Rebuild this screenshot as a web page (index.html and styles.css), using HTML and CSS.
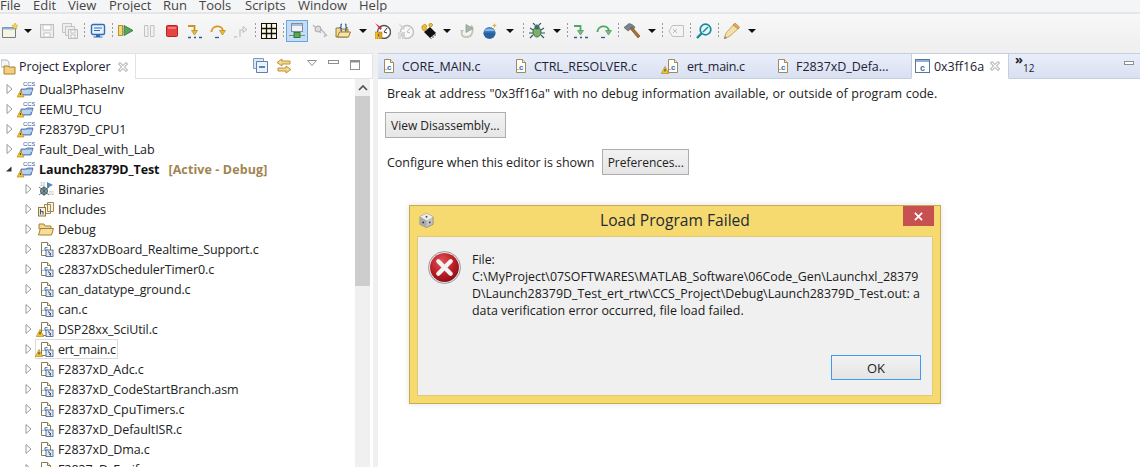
FILE: index.html
```html
<!DOCTYPE html>
<html lang="en">
<head>
<meta charset="utf-8">
<title>Load Program Failed</title>
<link rel="stylesheet" href="styles.css">
</head>
<body>
<svg class="defs" width="0" height="0">
  <defs>
    <symbol id="proj" viewBox="0 0 18 18">
      <path d="M4 9h5l1-1h6l-2 7H4z" fill="#8db4e2" stroke="#3f659c" stroke-width=".8"/>
      <path d="M5 11h10M5 13h8" stroke="#fff" stroke-width=".8"/>
      <text x="6" y="6" font-size="6" font-family="Liberation Sans" fill="#2d5a9a">CCS</text>
      <path d="M3.500 10.500L7 17H0z" fill="#f4c430" stroke="#a87d10" stroke-width=".6"/>
      <path d="M3.500 13v2" stroke="#222" stroke-width=".8"/>
    </symbol>
    <symbol id="cfile" viewBox="0 0 16 16">
      <path d="M3.500 1.500h6l3 3v10h-9z" fill="#fff" stroke="#a08a58"/>
      <path d="M9.500 1.500v3h3" fill="#f6ecd0" stroke="#a08a58"/>
      <text x="6" y="12" font-size="8" font-weight="700" font-family="Liberation Sans" fill="#3c6ea5">c</text>
      <rect x="4.500" y="11" width="1" height="1" fill="#3c6ea5"/>
    </symbol>
    <symbol id="cref" viewBox="0 0 16 16">
      <path d="M3.500 1.500h6l3 3v10h-9z" fill="#fff" stroke="#8a7a50"/>
      <path d="M9.500 1.500v3h3" fill="#f6ecd0" stroke="#8a7a50"/>
      <text x="6" y="10" font-size="7" font-weight="700" font-family="Liberation Sans" fill="#3c6ea5">c</text>
      <rect x="4.500" y="9" width="1" height="1" fill="#3c6ea5"/>
      <rect x="8" y="9" width="7" height="6.500" fill="#dfe8f5" stroke="#3a5f8c" stroke-width=".8"/>
      <path d="M10 10.500l3 2.500-1.300.2.800 1.300" stroke="#223" stroke-width=".9" fill="none"/>
    </symbol>
    <symbol id="warn" viewBox="0 0 8 8">
      <path d="M4 .5L7.700 7.500H.3z" fill="#f4c430" stroke="#a87d10" stroke-width=".6"/>
      <path d="M4 3v2.500" stroke="#222" stroke-width=".9"/>
    </symbol>
    <symbol id="tri" viewBox="0 0 8 12">
      <path d="M2 1.500L7 6 2 10.500z" fill="#fff" stroke="#9a9a9a"/>
    </symbol>
    <symbol id="x" viewBox="0 0 12 12">
      <path d="M1.500 3L3 1.500 6 4.500 9 1.500 10.500 3 7.500 6 10.500 9 9 10.500 6 7.500 3 10.500 1.500 9 4.500 6z" fill="#fff" stroke="#9a9a9a"/>
    </symbol>
  </defs>
</svg>

<div class="menu">
  <span class="m-file">File</span><span class="m-edit">Edit</span><span class="m-view">View</span><span class="m-proj">Project</span><span class="m-run">Run</span><span class="m-tools">Tools</span><span class="m-scr">Scripts</span><span class="m-win">Window</span><span class="m-help">Help</span>
</div>

<div class="toolbar">
  <svg class="ic" viewBox="0 0 16 16"><path d="M.5 4.500h13v10H.5z" fill="#f8f4e0" stroke="#6f7f92"/><path d="M.5 4.500h13v2H.5z" fill="#8fb0d8"/><path d="M13 0l1 2 2 .5-1.500 1.500.3 2L13 5l-1.800 1 .3-2L10 2.500l2-.5z" fill="#f7d648" stroke="#c49a20" stroke-width=".5"/></svg>
  <i class="arr first"></i>
  <svg class="ic" viewBox="0 0 16 16"><path d="M1.500 1.500h13v13h-13z" fill="#eee" stroke="#bbb"/><path d="M4 2h8v5H4zM5 10h6v4H5z" fill="#fff" stroke="#c4c4c4"/></svg>
  <svg class="ic" viewBox="0 0 16 16"><path d="M.5.500h9v9h-9z" fill="#eee" stroke="#c4c4c4"/><path d="M3.500 3.500h9v9h-9z" fill="#eee" stroke="#c4c4c4"/><path d="M6 6h10v10H6z" fill="#eee"/><path d="M6.500 6.500h9v9h-9z" fill="#eee" stroke="#bbb"/><path d="M9 7h4v3H9zM9 12h4v3H9z" fill="#fff" stroke="#c4c4c4"/></svg>
  <i class="sep"></i>
  <svg class="ic" viewBox="0 0 16 16"><rect x="1.500" y="1.500" width="13" height="10" rx="1.500" fill="#e8f1fb" stroke="#2f6eb5" stroke-width="1.400"/><path d="M4 5h8M4 7.500h6" stroke="#2f6eb5"/><path d="M6 12h4v1.500h2.500v1h-9v-1H6z" fill="#2f6eb5"/></svg>
  <i class="sep"></i>
  <svg class="ic" viewBox="0 0 16 16"><rect x=".5" y="2.500" width="4" height="10" fill="#f4d675" stroke="#b8932a"/><path d="M6 2.500v10l9-5z" fill="#58a45f" stroke="#3c8446"/></svg>
  <svg class="ic" viewBox="0 0 16 16"><path d="M3.500 2.500h3.500v11H3.500zM9.500 2.500H13v11H9.500z" fill="#f2f2f2" stroke="#c2c2c2"/></svg>
  <svg class="ic" viewBox="0 0 16 16"><rect x="2.500" y="2.500" width="11" height="11" rx="1" fill="#e64343" stroke="#b82222"/><rect x="4" y="4" width="8" height="2" fill="#f47a7a"/></svg>
  <svg class="ic" viewBox="0 0 16 16"><path d="M1 3h6.500v6" fill="none" stroke="#c89520" stroke-width="1.800"/><path d="M4.500 7.500h6L7.500 12z" fill="#eebb33" stroke="#a87d10" stroke-width=".6"/><path d="M1 14.500h3M7 14.500h2M12 14.500h3" stroke="#2d5a9a" stroke-width="1.300"/></svg>
  <svg class="ic" viewBox="0 0 16 16"><path d="M1.500 9C1.500 2.500 12 1 13 8" fill="none" stroke="#d79a20" stroke-width="1.800"/><path d="M9.500 7.500h6L12.500 12z" fill="#eebb33" stroke="#a87d10" stroke-width=".6"/><path d="M5 14.500h4" stroke="#2d5a9a" stroke-width="1.300"/></svg>
  <svg class="ic" viewBox="0 0 16 16"><path d="M7 14V7h4" fill="none" stroke="#cfcfcf" stroke-width="1.600"/><path d="M10 3.500v6L14 6.500z" fill="#eee" stroke="#c0c0c0"/><path d="M1 14h3" stroke="#bcbcbc" stroke-width="1.200"/></svg>
  <i class="sep"></i>
  <svg class="ic" viewBox="0 0 16 16"><rect x=".5" y=".5" width="15" height="15" fill="#fffbe0" stroke="#111"/><path d="M5.500 1v14M10.500 1v14M1 5.500h14M1 10.500h14" stroke="#111" stroke-width="1.300"/></svg>
  <i class="sep"></i>
  <span class="hl"><svg class="ic" viewBox="0 0 16 16"><rect x="2.500" y=".5" width="11" height="8" fill="#f2f2f2" stroke="#7d8ea6"/><rect x="3" y="1" width="10" height="2" fill="#a8bedd"/><path d="M8 9v3M0 12.500h16" stroke="#8a8a70"/><rect x="5" y="9.500" width="6" height="5" fill="#5aa85a" stroke="#2f7a3a"/></svg></span>
  <svg class="ic" viewBox="0 0 16 16"><path d="M1 2l8 8M3 8l5-5M7 4l8 9M12 14l2-3" stroke="#bdbdbd" stroke-width="1.500" fill="none"/><circle cx="6" cy="6" r="3" fill="#dcdcdc" stroke="#aaa"/></svg>
  <svg class="ic" viewBox="0 0 16 16"><path d="M1 5h5l1 1h6v8H1z" fill="#f3d896" stroke="#9c7a2e"/><path d="M2.500 14l2-5h11l-2 5z" fill="#f7e3ad" stroke="#9c7a2e"/><path d="M7 1C5 1 7 4 5.500 4.500 7 5 5 8 7 8M10 1c2 0 0 3 1.500 3.500C10 5 12 8 10 8" fill="none" stroke="#2c5a92" stroke-width="1.200"/></svg>
  <i class="arr"></i>
  <svg class="ic ic-timer" viewBox="0 0 16 16"><circle cx="9" cy="9" r="6.500" fill="#fff" stroke="#555" stroke-width="1.400"/><path d="M12 5L9 9l3 1" stroke="#333" fill="none"/><path d="M0 0l7 5-1.500 2z" fill="#e21e3c"/><rect y="9" width="3" height="7" fill="#f0c020" stroke="#a87d10" stroke-width=".5"/><rect x="4" y="9" width="3" height="7" fill="#e9a21e" stroke="#a87d10" stroke-width=".5"/></svg>
  <svg class="ic" viewBox="0 0 16 16"><circle cx="9" cy="9" r="6.500" fill="#f7f7f7" stroke="#c0c0c0" stroke-width="1.400"/><path d="M12 5L9 9l3 1" stroke="#bbb" fill="none"/><path d="M0 0l7 5-1.500 2z" fill="#cfcfcf"/><rect y="9" width="3" height="7" fill="#ddd"/><rect x="4" y="9" width="3" height="7" fill="#d2d2d2"/></svg>
  <svg class="ic" viewBox="0 0 16 16"><path d="M3 9l6-5 6 6-6 5z" fill="#111"/><path d="M1 3l3-2 2 2-1 2 1 2-3 1-2-2z" fill="#eebb33" stroke="#a87d10" stroke-width=".6"/><path d="M8 1l2-1 2 2-2 2-2-1z" fill="#eebb33" stroke="#a87d10" stroke-width=".6"/><path d="M10 15v1M12 13v2M14 11v2" stroke="#555"/></svg>
  <i class="arr first after-chip"></i>
  <svg class="ic" viewBox="0 0 16 16"><path d="M12 2.500C15 5.500 14 13.500 8 14 3.500 14.500 1.500 11 3 8.500" fill="none" stroke="#c7c2b0" stroke-width="1.800"/><path d="M1 7l4 0-2 3z" fill="#c7c2b0"/><path d="M7 1.500v8l7-4z" fill="#a8b6a8" stroke="#8e9a8e" stroke-width=".7"/></svg>
  <svg class="ic" viewBox="0 0 16 16"><circle cx="7.500" cy="10" r="6" fill="#3e7ec0"/><path d="M1.500 9.500a6 6 0 0 0 12 0z" fill="#2a609e"/><path d="M2 8a6 4 0 0 1 11 0z" fill="#8db5de"/><path d="M12.500 0l.7 1.800 1.800.7-1.800.7-.7 1.800-.7-1.800-1.800-.7 1.800-.7z" fill="#eab02a"/></svg>
  <i class="arr after-ball"></i>
  <i class="sep"></i>
  <svg class="ic" viewBox="0 0 16 16"><ellipse cx="8" cy="9" rx="4" ry="5" fill="#7cb06a" stroke="#3a6e50"/><circle cx="8" cy="4" r="2.500" fill="#3f7068"/><path d="M4 7L1 5M4 10H0M4 12l-3 3M12 7l3-2M12 10h4M12 12l3 3M6 2L4 0M10 2l2-2" stroke="#33585a" stroke-width="1.100"/></svg>
  <i class="arr"></i>
  <i class="sep"></i>
  <svg class="ic" viewBox="0 0 16 16"><path d="M1 3h6.500v6" fill="none" stroke="#4fa860" stroke-width="1.800"/><path d="M4.500 7.500h6L7.500 12z" fill="#6cc47a" stroke="#3c8c4c" stroke-width=".6"/><path d="M1 14.500h3M7 14.500h2M12 14.500h3" stroke="#2d5a9a" stroke-width="1.300"/></svg>
  <svg class="ic" viewBox="0 0 16 16"><path d="M1.500 9C1.500 2.500 12 1 13 8" fill="none" stroke="#4fa860" stroke-width="1.800"/><path d="M9.500 7.500h6L12.500 12z" fill="#6cc47a" stroke="#3c8c4c" stroke-width=".6"/><path d="M5 14.500h4" stroke="#2d5a9a" stroke-width="1.300"/></svg>
  <i class="sep"></i>
  <svg class="ic" viewBox="0 0 16 16"><path d="M0 4.500L5 .5l3 1 3 2.500-2 3-2.500-1L4 8z" fill="#7b8590" stroke="#4e5660" stroke-width=".6"/><path d="M6 5.500l8 9.500 2-2-8-9z" fill="#a8702e" stroke="#6e4a1c" stroke-width=".6"/></svg>
  <i class="arr"></i>
  <i class="sep"></i>
  <svg class="ic" viewBox="0 0 16 16"><path d="M4.500 2.500h11v11h-11L1 8z" fill="#f4f4f4" stroke="#c0c0c0"/><path d="M5 6l2 2-2 2M9 6l-2 2 2 2" stroke="#bdbdbd" fill="none"/></svg>
  <i class="sep"></i>
  <svg class="ic" viewBox="0 0 16 16"><circle cx="9.500" cy="6.500" r="5.300" fill="#e6f5f7" stroke="#148a9e" stroke-width="1.700"/><path d="M5.500 10.500L1 15" stroke="#148a9e" stroke-width="2.400"/><path d="M7 9l5-5" stroke="#148a9e" stroke-width="1.500"/></svg>
  <i class="sep"></i>
  <svg class="ic" viewBox="0 0 16 16"><path d="M0 16l2-6 8-9 5 4-9 8z" fill="#f4dfa6" stroke="#b89b55" stroke-width=".8"/><path d="M9 2l5 4 1.500-2L11 0z" fill="#e3a94a" stroke="#a87d30" stroke-width=".6"/><path d="M0 16l3-1-2-2z" fill="#888"/></svg>
  <i class="arr"></i>
</div>

<div class="workbench">
  <section class="left">
    <div class="ltabs">
      <div class="ltab">
        <svg class="ic" viewBox="0 0 16 16"><path d="M0 1h6l2 2v5H0z" fill="#f5f5f5" stroke="#9aa5b5" stroke-width=".8"/><path d="M3 7h4l1 1h6v7H3z" fill="#f2cf7e" stroke="#a5822f"/></svg>
        <span>Project Explorer</span>
        <svg class="close" viewBox="0 0 12 12"><use href="#x"/></svg>
      </div>
      <div class="lacts">
        <svg class="act a1" viewBox="0 0 16 16"><path d="M.5.500h10v10H.5z" fill="#dbe7f5" stroke="#7e9cc0"/><path d="M3.500 3.500h11v11h-11z" fill="#eaf2fb" stroke="#5d80ad"/><path d="M6 9h6" stroke="#2f5e96" stroke-width="1.500"/></svg>
        <svg class="act a2" viewBox="0 0 16 16"><path d="M6 1L1 4.500 6 8V6h8V3H6zM10 8l5 3.500-5 3.500v-2H2v-3h8z" fill="#f4d892" stroke="#b7892b" stroke-width=".9"/></svg>
        <svg class="vm m1" viewBox="0 0 12 8"><path d="M1.500 1.500h9L6 6.500z" fill="#fff" stroke="#8f8f8f"/></svg>
        <svg class="vm m2x" viewBox="0 0 12 8"><rect x=".5" y="1.500" width="10" height="3" fill="#fff" stroke="#8f8f8f"/></svg>
        <svg class="vm m3x" viewBox="0 0 12 12"><rect x=".5" y=".5" width="9" height="9" fill="#fff" stroke="#8f8f8f"/><path d="M1 1.500h8" stroke="#8f8f8f" stroke-width="2"/></svg>
      </div>
    </div>
    <div class="treewrap">
      <div class="tree">
        <div class="row"><svg class="tw"><use href="#tri"/></svg><svg class="pi"><use href="#proj"/></svg><span>Dual3PhaseInv</span></div>
        <div class="row"><svg class="tw"><use href="#tri"/></svg><svg class="pi"><use href="#proj"/></svg><span>EEMU_TCU</span></div>
        <div class="row"><svg class="tw"><use href="#tri"/></svg><svg class="pi"><use href="#proj"/></svg><span>F28379D_CPU1</span></div>
        <div class="row"><svg class="tw"><use href="#tri"/></svg><svg class="pi"><use href="#proj"/></svg><span>Fault_Deal_with_Lab</span></div>
        <div class="row"><svg class="tw" viewBox="0 0 8 12"><path d="M1 8.500L6.500 3.500V8.500z" fill="#333"/></svg><svg class="pi"><use href="#proj"/></svg><b>Launch28379D_Test</b><em>[Active - Debug]</em></div>
        <div class="row sub"><svg class="tw"><use href="#tri"/></svg><svg class="fi" viewBox="0 0 16 16"><path d="M9 1v6l6-3z" fill="#4f86bd"/><circle cx="6" cy="10" r="3.500" fill="#8fa6a6" stroke="#3f5a66"/><path d="M1 6l10 8M1 14l10-8M6 5v10" stroke="#3f5a66" stroke-width=".8"/><text x="2" y="5" font-size="4.500" fill="#aaa" font-family="Liberation Sans">10</text><text x="11" y="14" font-size="4.500" fill="#aaa" font-family="Liberation Sans">01</text></svg><span>Binaries</span></div>
        <div class="row sub"><svg class="tw"><use href="#tri"/></svg><svg class="fi" viewBox="0 0 16 16"><path d="M9.500 1.500h6v9h-6zM6.500 3.500h6v9h-6z" fill="#faf2da" stroke="#9c8a5a"/><rect x=".5" y="6.500" width="7" height="8.500" fill="#fbf0cf" stroke="#96793a"/><path d="M2.500 8v5.500M2.500 10.500h2.500v3" stroke="#2d5a8a" stroke-width="1.100" fill="none"/></svg><span>Includes</span></div>
        <div class="row sub"><svg class="tw"><use href="#tri"/></svg><svg class="fi" viewBox="0 0 16 16"><path d="M1 5V3h5l1 2h6v3H1z" fill="#f4d892" stroke="#a5822f"/><path d="M.5 14l2-6.500h13l-2 6.500z" fill="#f6dd9e" stroke="#a5822f"/></svg><span>Debug</span></div>
        <div class="row sub"><svg class="tw"><use href="#tri"/></svg><svg class="fi"><use href="#cref"/></svg><span>c2837xDBoard_Realtime_Support.c</span></div>
        <div class="row sub"><svg class="tw"><use href="#tri"/></svg><svg class="fi"><use href="#cref"/></svg><span>c2837xDSchedulerTimer0.c</span></div>
        <div class="row sub"><svg class="tw"><use href="#tri"/></svg><svg class="fi"><use href="#cref"/></svg><span>can_datatype_ground.c</span></div>
        <div class="row sub"><svg class="tw"><use href="#tri"/></svg><svg class="fi"><use href="#cref"/></svg><span>can.c</span></div>
        <div class="row sub"><svg class="tw"><use href="#tri"/></svg><span class="fiw"><svg class="fi"><use href="#cref"/></svg><svg class="wn"><use href="#warn"/></svg></span><span>DSP28xx_SciUtil.c</span></div>
        <div class="row sub sel"><svg class="tw"><use href="#tri"/></svg><span class="box"><span class="fiw"><svg class="fi"><use href="#cref"/></svg><svg class="wn"><use href="#warn"/></svg></span><span class="tight">ert_main.c</span></span></div>
        <div class="row sub"><svg class="tw"><use href="#tri"/></svg><svg class="fi"><use href="#cref"/></svg><span>F2837xD_Adc.c</span></div>
        <div class="row sub"><svg class="tw"><use href="#tri"/></svg><svg class="fi"><use href="#cref"/></svg><span>F2837xD_CodeStartBranch.asm</span></div>
        <div class="row sub"><svg class="tw"><use href="#tri"/></svg><svg class="fi"><use href="#cref"/></svg><span>F2837xD_CpuTimers.c</span></div>
        <div class="row sub"><svg class="tw"><use href="#tri"/></svg><svg class="fi"><use href="#cref"/></svg><span>F2837xD_DefaultISR.c</span></div>
        <div class="row sub"><svg class="tw"><use href="#tri"/></svg><svg class="fi"><use href="#cref"/></svg><span>F2837xD_Dma.c</span></div>
        <div class="row sub"><svg class="tw"><use href="#tri"/></svg><svg class="fi"><use href="#cref"/></svg><span>F2837xD_Emif.c</span></div>
      </div>
      <div class="scroll">
        <div class="sup"><svg viewBox="0 0 10 6" width="10" height="6"><path d="M1 5l4-4 4 4" fill="none" stroke="#505050" stroke-width="1.700"/></svg></div>
        <div class="thumb"></div>
      </div>
    </div>
  </section>

  <section class="right">
    <div class="rtabs">
      <div class="rt t1"><svg class="fi"><use href="#cfile"/></svg><span>CORE_MAIN.c</span></div>
      <div class="rt t2"><svg class="fi"><use href="#cfile"/></svg><span>CTRL_RESOLVER.c</span></div>
      <div class="rt t3"><span class="fiw"><svg class="fi"><use href="#cfile"/></svg><svg class="wn"><use href="#warn"/></svg></span><span class="tight">ert_main.c</span></div>
      <div class="rt t4"><svg class="fi"><use href="#cfile"/></svg><span>F2837xD_Defa...</span></div>
      <div class="rt active"><svg class="fi" viewBox="0 0 16 16"><rect x=".5" y="1.500" width="14" height="13" fill="#fff" stroke="#56789c"/><rect x="1" y="2" width="13" height="2" fill="#8fb0d8"/><text x="5" y="12.500" font-size="9" font-weight="700" font-family="Liberation Sans" fill="#3c6ea5">c</text></svg><span>0x3ff16a</span><svg class="close" viewBox="0 0 12 12"><use href="#x"/></svg></div>
      <div class="more"><span class="mm">»</span><span class="mn">12</span></div>
      <svg class="vm rmin" viewBox="0 0 12 8"><rect x=".5" y="1.500" width="9" height="3" fill="#fff" stroke="#8f8f8f"/></svg>
    </div>
    <div class="editor">
      <p class="msg">Break at address "0x3ff16a" with no debug information available, or outside of program code.</p>
      <button class="btn vd" type="button">View Disassembly...</button>
      <div class="cfg"><span>Configure when this editor is shown</span><button class="btn pref" type="button">Preferences...</button></div>
    </div>
  </section>
</div>

<div class="dialog">
  <div class="dtitle">
    <svg class="cube" viewBox="0 0 16 16"><path d="M8 .5l7 3.500v8l-7 3.500-7-3.500V4z" fill="#c4c4c4" stroke="#777" stroke-width=".7"/><path d="M8 8L1 4l7-3.500L15 4z" fill="#eee"/><path d="M8 8v7.500L1 12V4z" fill="#aaa"/><circle cx="8" cy="4" r="1" fill="#444"/><circle cx="4.500" cy="10" r="1" fill="#333"/><circle cx="11.500" cy="10" r="1" fill="#444"/></svg>
    <span class="dname">Load Program Failed</span>
    <div class="dclose"><svg viewBox="0 0 10 10" width="9" height="9"><path d="M1 1l8 8M9 1l-8 8" stroke="#fff" stroke-width="1.800"/></svg></div>
  </div>
  <div class="dbody">
    <div class="dmsg">
      <svg class="err" viewBox="0 0 32 32"><defs><radialGradient id="rg" cx=".4" cy=".3" r=".8"><stop offset="0" stop-color="#e4525a"/><stop offset=".6" stop-color="#b51a22"/><stop offset="1" stop-color="#7c0f14"/></radialGradient></defs><circle cx="16" cy="16" r="15.500" fill="#e9e9e9" stroke="#888" stroke-width=".8"/><circle cx="16" cy="16" r="14" fill="url(#rg)"/><path d="M10 10l12 12M22 10L10 22" stroke="#f3f3f3" stroke-width="4.200" stroke-linecap="round"/></svg>
      <p>File:<br>C:\MyProject\07SOFTWARES\MATLAB_Software\06Code_Gen\Launchxl_28379<br>D\Launch28379D_Test_ert_rtw\CCS_Project\Debug\Launch28379D_Test.out: a<br>data verification error occurred, file load failed.</p>
    </div>
    <div class="dfoot"><button class="okb" type="button">OK</button></div>
  </div>
</div>
</body>
</html>
```

FILE: styles.css
```css
* { box-sizing: border-box; }
html, body { margin: 0; padding: 0; width: 1140px; height: 467px; overflow: hidden; }
body { position: relative; background: #f0f0f0; font-family: "Open Sans", "Noto Sans", sans-serif; font-size: 12px; color: #1a1a1a; }
.defs { position: absolute; }
svg { display: block; flex: none; }

.menu { height: 14px; background: #f4f5f7; border-bottom: 2px solid #e6e6e6; display: flex; align-items: flex-end; overflow: hidden; color: #444; font-size: 13px; line-height: 17px; }
.menu span { flex: none; position: relative; top: 2px; }
.m-file { width: 33px; }
.m-edit { width: 35px; }
.m-view { width: 41px; }
.m-proj { width: 54px; }
.m-run { width: 36px; }
.m-tools { width: 46px; }
.m-scr { width: 53px; }
.m-win { width: 61px; }

.toolbar { height: 34px; background: linear-gradient(#f8f8f8, #efefef); display: flex; align-items: center; gap: 7px; padding-left: 2px; }
.ic { width: 16px; height: 16px; }
.arr { width: 8px; height: 4px; margin-left: 1px; border-top: 4px solid #111; border-left: 4px solid transparent; border-right: 4px solid transparent; }
.first { margin-left: -1px; }
.after-chip { margin-right: 1px; }
.after-ball { margin-right: 3px; }
.ic-timer { margin-left: 1px; }
.sep { width: 1px; height: 16px; margin: 0 -2px 0 -1px; background: repeating-linear-gradient(#9a9a9a 0 2px, transparent 2px 4px); }
.hl { width: 22px; height: 22px; margin: 0 -3px; display: flex; align-items: center; justify-content: center; background: #c4ddf6; border: 1px solid #6aa6de; }

.workbench { display: flex; height: 419px; padding-top: 5px; gap: 5px; }
.left { width: 373px; background: #fff; display: flex; flex-direction: column; flex: none; }
.ltabs { height: 26px; flex: none; display: flex; background: #fff; border-top: 1px solid #dfe3ea; border-right: 1px solid #dfe3ea; border-bottom: 1px solid #dfe3ea; }
.ltab { width: 136px; margin-bottom: -1px; background: #fff; border-right: 1px solid #dfe3ea; display: flex; align-items: center; font-size: 12.5px; letter-spacing: -.1px; color: #223; }
.ltab .ic { margin-left: 1px; }
.ltab span { margin-left: 2px; }
.close { width: 12px; height: 12px; margin-left: 7px; }
.lacts { flex: 1; display: flex; align-items: center; position: relative; }
.act { width: 16px; height: 16px; }
.a1 { margin-left: 117px; }
.a2 { margin-left: 7px; }
.vm { width: 12px; height: 8px; }
.m1 { margin-left: 14px; margin-top: -6px; }
.m2x { margin-left: 10px; margin-top: -6px; }
.m3x { height: 12px; margin-left: 10px; }

.treewrap { flex: 1; display: flex; overflow: hidden; }
.tree { flex: 1; }
.row { height: 20px; display: flex; align-items: center; padding-left: 5px; font-size: 12.5px; letter-spacing: -.1px; white-space: nowrap; color: #222; }
.tw { width: 8px; height: 12px; }
.pi { width: 18px; height: 18px; margin-left: 4px; margin-right: 4px; }
.row b { font-weight: 700; color: #111; }
.row em { font-style: normal; font-weight: 700; letter-spacing: .1px; color: #a08550; margin-left: 9px; }
.sub { padding-left: 24px; }
.fi { width: 16px; height: 16px; margin-left: 6px; margin-right: 4px; }
.fiw { position: relative; display: block; flex: none; width: 26px; height: 16px; }
.wn { position: absolute; left: 4px; top: 8px; width: 8px; height: 8px; }
.tight { letter-spacing: -.3px; }
.box { display: flex; align-items: center; height: 20px; border: 1px solid #dcdcdc; margin-left: 3px; padding-right: 1px; }
.box .fiw { margin-left: -1px; width: 23px; }
.box .fi { margin-left: 3px; }
.box .wn { left: 0; }
.scroll { width: 15px; background: #f0f0f0; flex: none; margin-right: 3px; }
.sup { height: 17px; display: flex; align-items: center; justify-content: center; }
.thumb { height: 190px; background: #cdcdcd; }

.right { flex: 1; background: #fff; min-width: 0; }
.rtabs { height: 26px; display: flex; align-items: stretch; background: linear-gradient(#e9eefa, #d9e0f0); border-top: 1px solid #c6cfe2; border-bottom: 1px solid #c6cfe2; font-size: 12.5px; letter-spacing: -.05px; position: relative; color: #223; }
.rt { display: flex; align-items: center; flex: none; }
.t1 { width: 132px; }
.t2 { width: 151px; }
.t3 { width: 111px; }
.t4 { width: 139px; }
.rt .fi { margin-left: 3px; margin-right: 5px; }
.rt .fiw { width: 26px; }
.rt .fiw .fi { margin-left: 4px; }
.rt .wn { left: 0; }
.active { width: 98px; margin: -1px 0; background: #fff; border: 1px solid #c6cfe2; border-bottom-color: #fff; }
.rt.active .fi { margin-left: 3px; margin-right: 3px; }
.active .close { margin-left: 5px; }
.more { position: relative; width: 30px; margin-left: 6px; }
.mm { position: absolute; left: 0; top: -1px; font-weight: 700; font-size: 13px; line-height: 13px; color: #222; }
.mn { position: absolute; left: 8px; top: 7px; font-size: 10px; line-height: 14px; }
.rmin { position: absolute; right: 4px; top: 6px; }

.editor { padding: 6px 9px; }
.msg { margin: 0; font-size: 12.5px; word-spacing: .45px; line-height: 18px; color: #222; white-space: nowrap; }
.btn { display: block; height: 26px; padding: 0 5px; font: inherit; font-size: 12px; color: #222; background: linear-gradient(#f2f2f2, #e6e6e6); border: 1px solid #adadad; }
.vd { margin: 9px 0 0 -2px; }
.cfg { display: flex; align-items: center; gap: 8px; margin-top: 11px; font-size: 12.5px; letter-spacing: -.05px; color: #222; }
.pref { width: 87px; padding: 0; letter-spacing: 0; }

.dialog { position: absolute; left: 409px; top: 205px; width: 532px; height: 199px; background: #f6da6f; border: 1px solid #c8ae4b; box-shadow: 0 0 6px rgba(0,0,0,.12); display: flex; flex-direction: column; padding: 0 7px 7px; }
.dtitle { height: 30px; flex: none; position: relative; display: flex; align-items: center; justify-content: center; padding-bottom: 2px; }
.cube { position: absolute; left: 2px; top: 7px; width: 15px; height: 15px; }
.dname { font-size: 15.6px; color: #1f2a36; }
.dclose { position: absolute; right: -1px; top: 0; width: 31px; height: 20px; background: #c75050; display: flex; align-items: center; justify-content: center; }
.dbody { flex: 1; background: #f0f0f0; border: 1px solid #e0cb75; display: flex; flex-direction: column; justify-content: space-between; padding: 14px 11px 15px 10px; }
.dmsg { display: flex; gap: 11px; }
.err { width: 33px; height: 33px; }
.dmsg p { margin: 0; font-size: 12.4px; word-spacing: .1px; line-height: 17px; color: #1a1a1a; white-space: nowrap; }
.dfoot { display: flex; justify-content: flex-end; }
.okb { width: 90px; height: 25px; font: inherit; font-size: 13px; color: #222; background: linear-gradient(#f2f2f2, #e4e4e4); border: 1px solid #3f9af3; }
```
